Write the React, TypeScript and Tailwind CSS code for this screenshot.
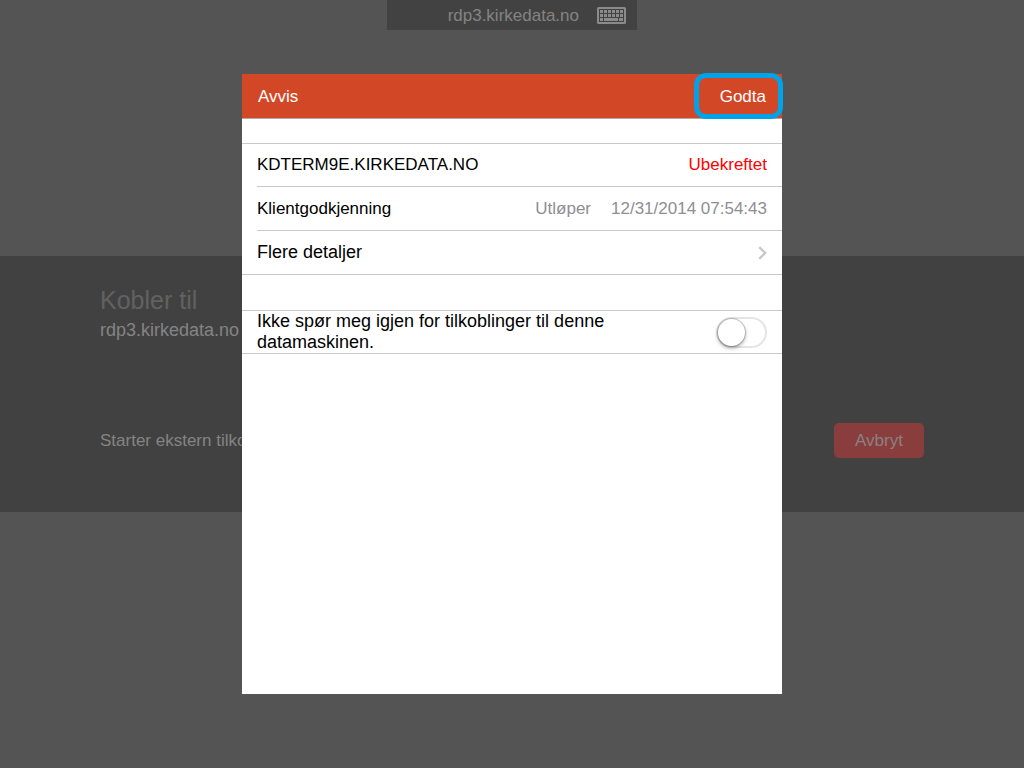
import { useState } from 'react'
import type { ReactNode } from 'react'

type RowProps = {
    label: string
    large?: boolean
    first?: boolean
    last?: boolean
    children: ReactNode
}

function KeyboardIcon()
{
    const keys = [0, 1, 2, 3, 4, 5]

    return (
        <svg width="29" height="17" viewBox="0 0 29 17" fill="none" aria-hidden="true">
            <rect x="1" y="1" width="27" height="15" rx="0.5" stroke="#8b8b8b" strokeWidth="2" />
            <rect x="2" y="2" width="25" height="13" fill="#424242" />
            {[3, 7].map((y) => keys.map((k) => (
                <rect key={`${y}-${k}`} x={3 + k * 4} y={y} width="3" height="3" fill="#8b8b8b" />
            )))}
            <rect x="3" y="11" width="3" height="3" fill="#8b8b8b" />
            <rect x="7" y="11" width="14" height="3" fill="#8b8b8b" />
            <rect x="22" y="11" width="4" height="3" fill="#8b8b8b" />
        </svg>
    )
}

function DetailRow({ label, large, first, last, children }: RowProps)
{
    return (
        <div className={`h-11 border-[#c8c7cc] ${first ? 'border-t' : ''} ${last ? '' : 'pl-[15px]'}`}>
            <div className={`flex h-full items-center justify-between border-b border-[#c8c7cc] pr-[15px] ${last ? 'pl-[15px]' : ''}`}>
                <span className={large ? 'text-[18px]' : 'text-[17px]'}>{label}</span>
                {children}
            </div>
        </div>
    )
}

function ConnectionScreen()
{
    return (
        <div className="grid min-h-screen grid-rows-3 bg-[#545454] text-[#848484]">
            <header className="flex justify-center">
                <div className="flex h-[30px] w-[250px] items-center justify-end gap-[18px] bg-[#424242] pr-[11px] text-[17px]">
                    <span className="pt-0.5">rdp3.kirkedata.no</span>
                    <button type="button" aria-label="Tastatur">
                        <KeyboardIcon />
                    </button>
                </div>
            </header>
            <main className="flex flex-col justify-between bg-[#414141] px-[100px] pt-7 pb-[54px]">
                <div>
                    <h1 className="text-[25px] leading-8 text-[#616161]">Kobler til</h1>
                    <p className="text-[18px] leading-7">rdp3.kirkedata.no</p>
                </div>
                <div className="flex items-center justify-between">
                    <p className="text-[17px]">Starter ekstern tilkobling</p>
                    <button type="button" className="h-[35px] w-[90px] rounded-[5px] bg-[#893d3d] text-[17px] text-[#8b8181]">
                        Avbryt
                    </button>
                </div>
            </main>
        </div>
    )
}

function CertificateDialog()
{
    const [skipPrompt, setSkipPrompt] = useState(false)

    return (
        <div role="dialog" aria-modal="true" aria-label="Klientgodkjenning" className="min-h-[620px] w-full max-w-[540px] bg-white text-black">
            <div className="relative flex h-[45px] items-center justify-between border-b border-[#b9a8a4] bg-[#d24726] px-4 pt-0.5 text-[17px] text-white">
                <button type="button">Avvis</button>
                <button type="button">Godta</button>
                <span className="pointer-events-none absolute -top-px -right-px h-[46px] w-[89px] rounded-xl border-5 border-[#00a2e8]" />
            </div>

            <section className="mt-6">
                <DetailRow label="KDTERM9E.KIRKEDATA.NO" first>
                    <span className="text-[17px] text-[#ff0000]">Ubekreftet</span>
                </DetailRow>
                <DetailRow label="Klientgodkjenning">
                    <span className="flex gap-5 text-[17px] text-[#8e8e93]">
                        <span>Utløper</span>
                        <span>12/31/2014 07:54:43</span>
                    </span>
                </DetailRow>
                <DetailRow label="Flere detaljer" large last>
                    <button type="button" aria-label="Vis flere detaljer">
                        <svg width="9" height="14" viewBox="0 0 9 14" fill="none" stroke="#c7c7cc" strokeWidth="2.4" aria-hidden="true">
                            <path d="M1.2 1.2 L7.2 7 L1.2 12.8" />
                        </svg>
                    </button>
                </DetailRow>
            </section>

            <section className="mt-[35px] flex items-center justify-between border-y border-[#c8c7cc] px-[15px]">
                <label htmlFor="skip-prompt" className="max-w-[380px] text-[18px] leading-[21px]">
                    Ikke spør meg igjen for tilkoblinger til denne datamaskinen.
                </label>
                <input
                    id="skip-prompt"
                    type="checkbox"
                    role="switch"
                    checked={skipPrompt}
                    onChange={(e) => setSkipPrompt(e.target.checked)}
                    className="h-[31px] w-[51px] shrink-0 appearance-none rounded-full border-2 border-[#e5e5e5] bg-white before:block before:size-[27px] before:rounded-full before:bg-white before:shadow-[0_2px_4px_rgba(0,0,0,0.35),0_0_1px_1px_rgba(0,0,0,0.2)] before:transition-transform checked:border-[#4cd964] checked:bg-[#4cd964] checked:before:translate-x-5"
                />
            </section>
        </div>
    )
}

export default function App()
{
    return (
        <div className="relative min-h-screen font-['Liberation_Sans',Arial,sans-serif]">
            <ConnectionScreen />
            <div className="absolute inset-0 flex items-center justify-center">
                <CertificateDialog />
            </div>
        </div>
    )
}
